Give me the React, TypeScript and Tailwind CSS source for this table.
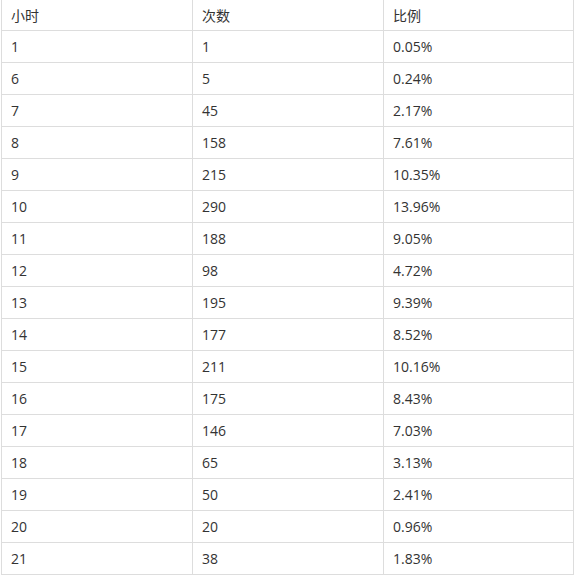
import React from "react";

const rows: [string, string, string][] = [
  ["1", "1", "0.05%"],
  ["6", "5", "0.24%"],
  ["7", "45", "2.17%"],
  ["8", "158", "7.61%"],
  ["9", "215", "10.35%"],
  ["10", "290", "13.96%"],
  ["11", "188", "9.05%"],
  ["12", "98", "4.72%"],
  ["13", "195", "9.39%"],
  ["14", "177", "8.52%"],
  ["15", "211", "10.16%"],
  ["16", "175", "8.43%"],
  ["17", "146", "7.03%"],
  ["18", "65", "3.13%"],
  ["19", "50", "2.41%"],
  ["20", "20", "0.96%"],
  ["21", "38", "1.83%"],
];

const Row = ({ cells, header }: { cells: string[]; header?: boolean }) => (
  <div
    className={`grid grid-cols-[191px_191px_189px] border-b border-[#dddddd] ${
      header ? "h-[31px]" : "h-[32px]"
    }`}
  >
    {cells.map((c, i) => (
      <div
        key={i}
        className={`flex items-center pl-[9px] ${i < 2 ? "border-r border-[#dddddd]" : ""}`}
      >
        {c}
      </div>
    ))}
  </div>
);

const App = () => {
  return (
    <div className="bg-white w-[576px] h-[576px] text-[14px] text-[#333333] font-['Open_Sans','Noto_Sans_CJK_SC',sans-serif]">
      <div className="ml-px w-[573px] border-l border-r border-[#dddddd]">
        <Row cells={["小时", "次数", "比例"]} header />
        {rows.map((r, i) => (
          <Row key={i} cells={r} />
        ))}
      </div>
    </div>
  );
};

export default App;
